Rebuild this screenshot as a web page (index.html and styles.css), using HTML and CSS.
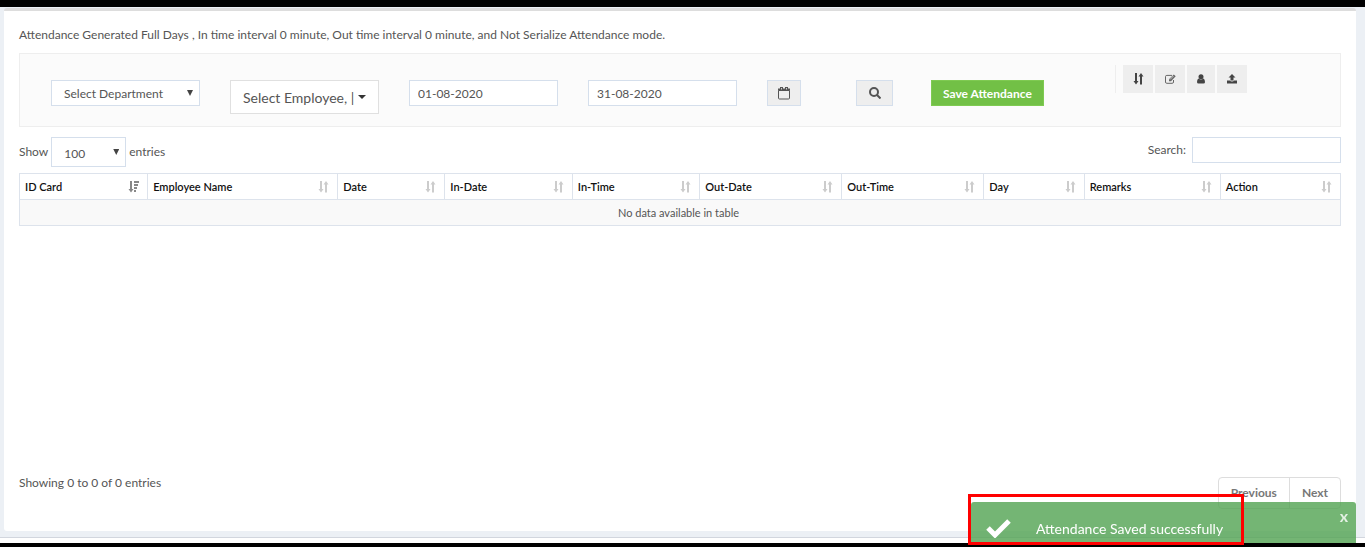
FILE: index.html
```
<!DOCTYPE html>
<html lang="en">
<head>
    <meta charset="UTF-8">
    <meta name="viewport" content="width=device-width, initial-scale=1.0">
    <title>Attendance</title>
    <link rel="stylesheet" href="styles.css">
</head>
<body>
    <svg class="sprite" aria-hidden="true">
        <symbol id="sort" viewBox="0 0 11 12">
            <path d="M2 0h2v8h1.500L3 11.500.5 8H2zM7 11.500h2v-8h1.500L8 0 5.500 3.500H7z"/>
        </symbol>
        <symbol id="sort-asc" viewBox="0 0 11 12">
            <path d="M2 0h2v8h1.500L3 11.500.5 8H2zM6 0h5v2H6zM6 3h4v2H6zM6 6h3v2H6zM6 9h2v2H6z"/>
        </symbol>
    </svg>

    <main class="card">
        <p class="mode-info">Attendance Generated Full Days , In time interval 0 minute, Out time interval 0 minute, and Not Serialize Attendance mode.</p>

        <form class="filters">
            <div class="select-wrap">
                <select class="control" aria-label="Department">
                    <option>Select Department</option>
                </select>
            </div>
            <button type="button" class="employee-btn">Select Employee, | <span class="caret"></span></button>
            <input type="text" class="control" value="01-08-2020" aria-label="From date">
            <input type="text" class="control" value="31-08-2020" aria-label="To date">
            <button type="button" class="icon-btn calendar-btn" aria-label="Calendar">
                <svg width="12" height="13" viewBox="0 0 12 13" fill="none" stroke="#555">
                    <path d="M.5 3.500v7.500q0 1 1 1h9q1 0 1-1V3.500z"/>
                    <path d="M0 2.500h12" stroke-width="2"/>
                    <path d="M3.500 0v3M8.500 0v3" stroke-width="3"/>
                    <path d="M3.500 1v1.500M8.500 1v1.500" stroke="#ccc"/>
                </svg>
            </button>
            <button type="button" class="icon-btn search-btn" aria-label="Search attendance">
                <svg width="12" height="12" viewBox="0 0 12 12" fill="none" stroke="#555" stroke-width="2">
                    <circle cx="5" cy="5" r="4"/>
                    <path d="M8 8l3.500 3.500"/>
                </svg>
            </button>
            <button type="button" class="save-btn">Save Attendance</button>
            <div class="tools">
                <button type="button" class="tool-btn" aria-label="Sort">
                    <svg class="tool-sort" width="11" height="12"><use href="#sort"/></svg>
                </button>
                <button type="button" class="tool-btn" aria-label="Edit">
                    <svg width="11" height="10" viewBox="0 0 11 10">
                        <path d="M8.500 6v2q0 1.300-1.300 1.300H1.800Q.5 9.300.5 8V2.700Q.5 1.400 1.800 1.400H7" fill="none" stroke="#666"/>
                        <path d="M4 5.300L8.800.5l1.900 1.800L6 7.200H4z" fill="#666"/>
                        <path d="M5 5.500l3.500-3.500" stroke="#eee" stroke-width=".7"/>
                    </svg>
                </button>
                <button type="button" class="tool-btn tool-narrow" aria-label="Employee">
                    <svg width="8" height="10" viewBox="0 0 8 10" fill="#444">
                        <circle cx="4" cy="2.700" r="2.500"/>
                        <path d="M1.600 4.400Q4 6.500 6.400 4.400 8 5 8 8q0 1.600-1.500 1.600h-5Q0 9.600 0 8 0 5 1.600 4.400z"/>
                    </svg>
                </button>
                <button type="button" class="tool-btn" aria-label="Upload">
                    <svg width="10" height="10" viewBox="0 0 10 10" fill="#444">
                        <path d="M5 0l3.500 3.500h-2v3h-3v-3h-2zM0 6.500h3q.3 1 2 1t2-1h3v3H0z"/>
                    </svg>
                </button>
            </div>
        </form>

        <div class="table-controls">
            <label class="length">
                Show
                <span class="select-wrap length-wrap">
                    <select class="control">
                        <option>100</option>
                    </select>
                </span>
                entries
            </label>
            <label class="table-search">
                Search:
                <input type="search" class="control">
            </label>
        </div>

        <table class="attendance">
            <colgroup>
                <col class="col-id">
                <col class="col-name">
                <col class="col-date">
                <col class="col-in">
                <col class="col-in">
                <col class="col-out">
                <col class="col-out">
                <col class="col-day">
                <col class="col-remarks">
                <col class="col-action">
            </colgroup>
            <thead>
                <tr>
                    <th><div class="head sorted">ID Card <svg width="11" height="12"><use href="#sort-asc"/></svg></div></th>
                    <th><div class="head">Employee Name <svg width="11" height="12"><use href="#sort"/></svg></div></th>
                    <th><div class="head">Date <svg width="11" height="12"><use href="#sort"/></svg></div></th>
                    <th><div class="head">In-Date <svg width="11" height="12"><use href="#sort"/></svg></div></th>
                    <th><div class="head">In-Time <svg width="11" height="12"><use href="#sort"/></svg></div></th>
                    <th><div class="head">Out-Date <svg width="11" height="12"><use href="#sort"/></svg></div></th>
                    <th><div class="head">Out-Time <svg width="11" height="12"><use href="#sort"/></svg></div></th>
                    <th><div class="head">Day <svg width="11" height="12"><use href="#sort"/></svg></div></th>
                    <th><div class="head">Remarks <svg width="11" height="12"><use href="#sort"/></svg></div></th>
                    <th><div class="head">Action <svg width="11" height="12"><use href="#sort"/></svg></div></th>
                </tr>
            </thead>
            <tbody>
                <tr>
                    <td colspan="10">No data available in table</td>
                </tr>
            </tbody>
        </table>

        <div class="table-footer">
            <span>Showing 0 to 0 of 0 entries</span>
            <nav class="pagination">
                <a href="#">Previous</a>
                <a href="#">Next</a>
            </nav>
        </div>
    </main>
    <footer class="footer"></footer>

    <div class="toast" role="status">
        <svg width="25" height="19" viewBox="0 0 25 19" fill="none" stroke="#fff" stroke-width="5">
            <path d="M2 9l7 7L23 2"/>
        </svg>
        <span>Attendance Saved successfully</span>
        <button type="button" class="toast-close" aria-label="Close">x</button>
    </div>
    <div class="highlight"></div>
</body>
</html>
```
FILE: styles.css
```
* {
    box-sizing: border-box;
}
body {
    margin: 0;
    height: 100vh;
    display: flex;
    flex-direction: column;
    border-top: 7px solid #000;
    border-bottom: 4px solid #000;
    background-color: #ecf0f5;
    color: #555;
    font-family: Lato, sans-serif;
    font-size: 12px;
    line-height: 18px;
    overflow: hidden;
}
button, input, select {
    font-family: inherit;
    color: inherit;
}
.sprite {
    position: absolute;
    width: 0;
    height: 0;
}
.card {
    flex: 1;
    display: flex;
    flex-direction: column;
    margin: 1px 9px 6px 4px;
    padding: 15px;
    background-color: #fff;
    border-top: 3px solid #ddd;
    border-radius: 3px;
}
.mode-info {
    margin: 0 0 9px;
}

/* filter bar */
.filters {
    display: grid;
    grid-template-columns: 149fr 149fr 149fr 149fr 59fr 45fr 154fr 194fr;
    gap: 30px;
    align-items: start;
    padding: 26px 31px 12px;
    background-color: #fbfbfb;
    border: 1px solid #eee;
}
.control {
    width: 100%;
    height: 26px;
    padding: 0 8px;
    border: 1px solid #d5dfec;
    border-radius: 0;
    background-color: #fff;
    font-size: 12px;
}
.select-wrap {
    position: relative;
}
.select-wrap .control {
    display: block;
    appearance: none;
    padding: 0 12px;
}
.select-wrap::after {
    content: "";
    position: absolute;
    right: 7px;
    top: 10px;
    width: 6px;
    height: 6px;
    background-color: #444;
    clip-path: polygon(0 0, 100% 0, 50% 100%);
    pointer-events: none;
}
.employee-btn {
    display: flex;
    align-items: center;
    justify-content: space-between;
    height: 34px;
    padding: 0 12px;
    border: 1px solid #e0e0e0;
    background-color: #fff;
    font-size: 14px;
    white-space: nowrap;
}
.caret {
    border: 4px solid transparent;
    border-top-color: #333;
    border-bottom: 0;
}
.icon-btn {
    display: flex;
    align-items: center;
    justify-content: center;
    height: 26px;
    padding: 0;
    border: 1px solid #d5dfec;
    background-color: #eee;
}
.calendar-btn {
    width: 34px;
}
.search-btn {
    width: 37px;
}
.save-btn {
    justify-self: start;
    height: 26px;
    padding: 0 11px;
    border: 1px solid #7fca52;
    background-color: #72c046;
    color: #fff;
    font-size: 12px;
    font-weight: 700;
    white-space: nowrap;
}
.tools {
    display: flex;
    gap: 2px;
    margin-top: -15px;
    padding-left: 7px;
    border-left: 1px solid #eee;
}
.tool-btn {
    display: flex;
    align-items: center;
    justify-content: center;
    width: 30px;
    height: 28px;
    padding: 0;
    border: 0;
    background-color: #eee;
}
.tool-narrow {
    width: 28px;
}
.tool-sort {
    fill: #444;
}

/* table */
.table-controls {
    display: flex;
    justify-content: space-between;
    align-items: flex-start;
    margin: 10px 0 6px;
}
.length {
    display: flex;
    align-items: center;
    gap: 3px;
}
.length-wrap {
    width: 75px;
}
.length-wrap .control {
    height: 30px;
    padding-top: 2px;
}
.length-wrap::after {
    top: 12px;
}
.table-search {
    display: flex;
    align-items: center;
    gap: 6px;
}
.table-search .control {
    width: 149px;
}
.attendance {
    width: 100%;
    table-layout: fixed;
    border-collapse: collapse;
    font-size: 11px;
}
.attendance th,
.attendance td {
    height: 26px;
    padding: 0 8px 0 5px;
    border: 1px solid #dde3ec;
}
.attendance th {
    color: #111;
    font-weight: 600;
    text-align: left;
}
.attendance td {
    background-color: #f9f9f9;
    text-align: center;
}
.col-id {
    width: 9.7%;
}
.col-name {
    width: 14.4%;
}
.col-date {
    width: 8.1%;
}
.col-in {
    width: 9.65%;
}
.col-out {
    width: 10.75%;
}
.col-day {
    width: 7.6%;
}
.col-remarks {
    width: 10.3%;
}
.col-action {
    width: 9.1%;
}
.head {
    display: flex;
    align-items: center;
    justify-content: space-between;
    white-space: nowrap;
}
.head svg {
    fill: #ccc;
}
.sorted svg {
    fill: #888;
}
.table-footer {
    display: flex;
    justify-content: space-between;
    align-items: flex-start;
    margin-top: auto;
    padding-bottom: 7px;
}
.table-footer span {
    margin-top: -3px;
}
.pagination {
    display: flex;
    border: 1px solid #ddd;
    border-radius: 4px;
}
.pagination a {
    padding: 6px 12px;
    color: #777;
    font-weight: 700;
    text-decoration: none;
}
.pagination a + a {
    border-left: 1px solid #ddd;
}
.footer {
    height: 6px;
    border-top: 1px solid #d2d6de;
    background-color: #fff;
}

/* saved message */
.toast {
    position: fixed;
    right: 9px;
    bottom: 4px;
    display: flex;
    align-items: center;
    gap: 25px;
    width: 385px;
    height: 41px;
    padding: 12px 15px 0;
    border-radius: 3px 3px 0 0;
    background-color: rgba(81, 163, 81, .8);
    color: #fff;
    font-size: 14px;
}
.toast-close {
    position: absolute;
    top: 4px;
    right: 8px;
    padding: 0;
    border: 0;
    background: none;
    color: #e4f1e4;
    font-size: 16px;
    font-weight: 700;
}
.highlight {
    position: fixed;
    right: 121px;
    bottom: 2px;
    width: 276px;
    height: 51px;
    border: 3px solid #f00;
}
```
